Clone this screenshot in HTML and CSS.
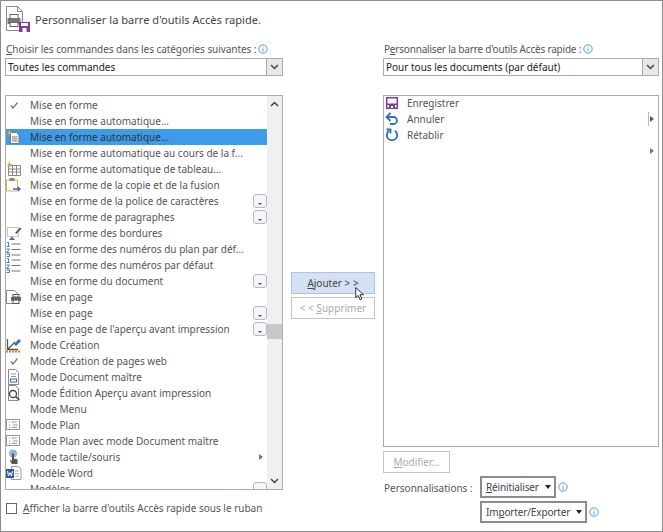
FILE: index.html
```html
<!DOCTYPE html>
<html lang="fr">
<head>
<meta charset="UTF-8">
<title>Personnaliser la barre d'outils Accès rapide</title>
<link rel="stylesheet" href="styles.css">
</head>
<body>
<svg class="defs" width="0" height="0">
  <symbol id="info" viewBox="0 0 10 10"><circle cx="5" cy="5" r="4.200" fill="#fff" stroke="#5b9bdc"/><path d="M5 2.400v1M5 4.400v3.200" stroke="#5b9bdc"/></symbol>
  <symbol id="chev" viewBox="0 0 9 6"><path d="M1 1l3.500 3.500L8 1" fill="none" stroke="#444" stroke-width="1.500"/></symbol>
  <symbol id="check" viewBox="0 0 16 16"><path d="M5 8.500l2 2.500 4.500-5.500" fill="none" stroke="#777" stroke-width="1.300"/></symbol>
  <symbol id="outline" viewBox="0 0 16 16"><rect x="0.500" y="2.500" width="13" height="10" fill="#fff" stroke="#999"/><path d="M3 5h1M3 8h1M3 10.500h1M6 5h5M7 8h5M6 10.500h5" stroke="#999"/></symbol>
  <symbol id="numbers" viewBox="0 0 16 16"><path d="M1 1.500h1.500v4M0.500 5.500H3.500M0.500 8h3L0.500 11.500h3M0.500 13h3v2.500h-3" fill="none" stroke="#2f6fb5" stroke-width="0.900"/><path d="M5.500 3h9M5.500 8.500h9M5.500 14h9" stroke="#777"/></symbol>
</svg>
<div class="dialog">
  <header class="title">
    <svg class="title-icon" width="26" height="28" viewBox="0 0 26 28">
      <path d="M1.500 1.500h11l5 5v19h-16z" fill="#fff" stroke="#888"/>
      <path d="M12.500 1.500v5h5" fill="none" stroke="#888"/>
      <rect x="5" y="9.500" width="8" height="4" fill="#fff" stroke="#666"/>
      <rect x="2.500" y="13" width="13" height="6" fill="#777"/>
      <rect x="5" y="17.500" width="8" height="4" fill="#fff" stroke="#666"/>
      <rect x="14" y="17" width="11" height="10" fill="#7d3f98"/>
      <rect x="16" y="18" width="7" height="3" fill="#fff"/>
      <rect x="17.500" y="23" width="4" height="4" fill="#fff"/>
    </svg>
    <span>Personnaliser la barre d'outils Accès rapide.</span>
  </header>

  <div class="columns">
    <section class="col col-left">
      <label class="field-label field-left"><u>C</u>hoisir les commandes dans les catégories suivantes :<svg class="info"><use href="#info"/></svg></label>
      <div class="select"><span>Toutes les commandes</span><b class="select-btn"><svg width="9" height="6"><use href="#chev"/></svg></b></div>
      <div class="list list-left">
        <ul class="rows">
          <li><svg class="ico"><use href="#check"/></svg>Mise en forme</li>
          <li><i class="ico"></i>Mise en forme automatique...</li>
          <li class="selected"><svg class="ico" viewBox="0 0 16 16"><path d="M4.500 3.500h6l2.500 2.500v8.500H4.500z" fill="#fff" stroke="#777"/><path d="M6 8h5.500M6 10h5.500M6 12h5.500" stroke="#777"/><path d="M4 0L1 5h2L2 8l4-5H4z" fill="#f0a030"/></svg>Mise en forme automatique...</li>
          <li><i class="ico"></i>Mise en forme automatique au cours de la f...</li>
          <li><svg class="ico" viewBox="0 0 16 16"><path d="M2.500 4.500h12v10h-12zM2.500 8h12M2.500 11h12M6.500 4.500v10M10.500 4.500v10" fill="#fff" stroke="#888"/><path d="M4 0L1 5h2L2 8l4-5H4z" fill="#f0a030"/></svg>Mise en forme automatique de tableau...</li>
          <li><svg class="ico" viewBox="0 0 16 16"><path d="M0.500 3h11v11h-11z" fill="#fff" stroke="#e5ad55"/><rect x="3.500" y="1" width="5" height="3" fill="#888"/><path d="M7 12h7m-2-2l2 2-2 2" fill="none" stroke="#2f6fb5" stroke-width="1.300"/></svg>Mise en forme de la copie et de la fusion</li>
          <li><i class="ico"></i>Mise en forme de la police de caractères<b class="gallery"></b></li>
          <li><i class="ico"></i>Mise en forme de paragraphes<b class="gallery"></b></li>
          <li><svg class="ico" viewBox="0 0 16 16"><rect x="1.500" y="2.500" width="11" height="9" fill="#fff" stroke="#888" stroke-dasharray="1 1"/><path d="M9 8l5-5.500 1.500 1L10.500 9z" fill="#555"/><path d="M3 15l3-3.500 3 3.500z" fill="#2f6fb5"/></svg>Mise en forme des bordures</li>
          <li><svg class="ico"><use href="#numbers"/></svg>Mise en forme des numéros du plan par déf...</li>
          <li><svg class="ico"><use href="#numbers"/></svg>Mise en forme des numéros par défaut</li>
          <li><i class="ico"></i>Mise en forme du document<b class="gallery"></b></li>
          <li><svg class="ico" viewBox="0 0 16 16"><path d="M0.500 1.500h8l3 3v10h-11z" fill="#fff" stroke="#888"/><rect x="5" y="8" width="10" height="4" fill="#666"/><rect x="7" y="11" width="6" height="3.500" fill="#fff" stroke="#555"/><rect x="7" y="5.500" width="6" height="2.500" fill="#fff" stroke="#555"/></svg>Mise en page</li>
          <li><i class="ico"></i>Mise en page<b class="gallery"></b></li>
          <li><i class="ico"></i>Mise en page de l'aperçu avant impression<b class="gallery"></b></li>
          <li><svg class="ico" viewBox="0 0 16 16"><path d="M1.500 2v10.500H12M1.500 12.500L9 5" fill="none" stroke="#555" stroke-width="1.300"/><path d="M8 7l5-5 2 2-5 5z" fill="#2f6fb5"/><path d="M0 14.500h15" stroke="#e87722" stroke-width="2" stroke-dasharray="2 1"/></svg>Mode Création</li>
          <li><svg class="ico"><use href="#check"/></svg>Mode Création de pages web</li>
          <li><svg class="ico" viewBox="0 0 16 16"><path d="M2.500 0.500h7l3 3v12h-10z" fill="#fff" stroke="#888"/><path d="M5 5h5M5 7.500h5" stroke="#999"/><rect x="4.500" y="10" width="6" height="3" fill="#fff" stroke="#2f6fb5"/></svg>Mode Document maître</li>
          <li><svg class="ico" viewBox="0 0 16 16"><path d="M2.500 0.500h7l3 3v12h-10z" fill="#fff" stroke="#888"/><circle cx="7" cy="9" r="3.500" fill="#fff" stroke="#444" stroke-width="1.300"/><path d="M9.500 11.500l4 3.500" stroke="#444" stroke-width="1.600"/></svg>Mode Édition Aperçu avant impression</li>
          <li><i class="ico"></i>Mode Menu</li>
          <li><svg class="ico"><use href="#outline"/></svg>Mode Plan</li>
          <li><svg class="ico"><use href="#outline"/></svg>Mode Plan avec mode Document maître</li>
          <li><svg class="ico" viewBox="0 0 16 16"><circle cx="7" cy="4.500" r="4" fill="#8db8e2"/><path d="M6 4.500h2v5l3.500 1v4.500H6L3.500 11l2.500.5z" fill="#555"/></svg>Mode tactile/souris<b class="submenu"></b></li>
          <li><svg class="ico" viewBox="0 0 16 16"><path d="M5.500 1.500h7l2.500 2.500v10.500h-9.500z" fill="#fff" stroke="#999"/><path d="M9 6h4M9 8.500h4M9 11h4" stroke="#aaa"/><rect x="0" y="4" width="8" height="9" fill="#2b5aa8"/><path d="M1.500 6l1 5 1.500-3.500L5.500 11l1-5" fill="none" stroke="#fff"/></svg>Modèle Word</li>
          <li><i class="ico"></i>Modèler<b class="gallery"></b></li>
        </ul>
        <div class="scrollbar">
          <svg class="scroll-arrow" width="9" height="6" viewBox="0 0 9 6"><path d="M1 5l3.500-3.500L8 5" fill="none" stroke="#444" stroke-width="1.500"/></svg>
          <div class="scroll-track"><div class="scroll-thumb"></div></div>
          <svg class="scroll-arrow" width="9" height="6"><use href="#chev"/></svg>
        </div>
      </div>
      <label class="check-row"><span class="checkbox"></span><span><u>A</u>fficher la barre d'outils Accès rapide sous le ruban</span></label>
    </section>

    <div class="col-mid">
      <button class="btn btn-add"><u>A</u>jouter &gt; &gt;</button>
      <button class="btn btn-off">&lt; &lt; <u>S</u>upprimer</button>
    </div>

    <section class="col col-right">
      <label class="field-label field-right">P<u>e</u>rsonnaliser la barre d'outils Accès rapide :<svg class="info"><use href="#info"/></svg></label>
      <div class="select"><span>Pour tous les documents (par défaut)</span><b class="select-btn"><svg width="9" height="6"><use href="#chev"/></svg></b></div>
      <div class="list list-right">
        <ul class="rows rows-right">
          <li><svg class="ico" viewBox="0 0 16 16"><path d="M2.700 2.700h10.600v10.600H2.700z" fill="#fff" stroke="#7d3f98" stroke-width="1.500"/><path d="M3 8.500h10v1.500H3zM5 10h6v3.500H5z" fill="#7d3f98"/><rect x="7" y="11" width="2" height="2" fill="#fff"/></svg>Enregistrer</li>
          <li><svg class="ico" viewBox="0 0 16 16"><path d="M3 6h6.500a3.500 3.500 0 0 1 0 7H6" fill="none" stroke="#2f6fb5" stroke-width="1.800"/><path d="M6.500 2L2.500 6l4 4" fill="none" stroke="#2f6fb5" stroke-width="1.800"/></svg>Annuler<b class="divider"></b><b class="submenu submenu-blue"></b></li>
          <li><svg class="ico" viewBox="0 0 16 16"><path d="M5.200 3.700a5.200 5.200 0 1 0 5.600 0" fill="none" stroke="#2f6fb5" stroke-width="1.800"/><path d="M2.500 2.500h4v4" fill="none" stroke="#2f6fb5" stroke-width="1.800"/></svg>Rétablir</li>
          <li><i class="ico"></i><b class="submenu"></b></li>
        </ul>
      </div>
      <button class="btn btn-off btn-modify"><u>M</u>odifier...</button>
      <div class="custom">
        <span class="custom-label">Personnalisations :</span>
        <div class="custom-btns">
          <div class="custom-line"><button class="btn-menu"><u>R</u>éinitialiser<b class="caret"></b></button><svg class="info"><use href="#info"/></svg></div>
          <div class="custom-line"><button class="btn-menu">Im<u>p</u>orter/Exporter<b class="caret"></b></button><svg class="info"><use href="#info"/></svg></div>
        </div>
      </div>
    </section>
  </div>
</div>
<svg class="cursor" width="10" height="16" viewBox="0 0 14 20"><path d="M1 1v14l3.500-3 2.500 6 2.500-1-2.500-6H12z" fill="#fff" stroke="#222" stroke-width="1.300"/></svg>
</body>
</html>
```

FILE: styles.css
```css
* {
  box-sizing: border-box;
}
html, body {
  margin: 0;
  height: 100%;
}
body {
  position: relative;
  width: 663px;
  height: 532px;
  overflow: hidden;
  background-color: #fff;
  font-family: "Noto Sans", "Open Sans", sans-serif;
  font-size: 10px;
  color: #555;
}
.defs {
  position: absolute;
}
.dialog {
  width: 663px;
  height: 532px;
  padding: 5px 2px 0 5px;
  border: 1px solid #8c8c8c;
}
.title {
  display: flex;
  align-items: center;
  gap: 4px;
  height: 28px;
  margin-left: -1px;
  padding-bottom: 2px;
  font-size: 11.1px;
  color: #444;
}
.columns {
  display: flex;
  margin-top: 8px;
  margin-left: -1px;
}
.col-left {
  width: 278px;
}
.col-right {
  width: 276px;
}
.col-mid {
  width: 100px;
  padding: 230px 8px 0 8px;
  display: flex;
  flex-direction: column;
  gap: 3px;
}
.field-label {
  display: flex;
  align-items: center;
  height: 16px;
  padding: 0 0 2px 1px;
  white-space: nowrap;
}
.field-left {
  letter-spacing: -0.06px;
}
.field-right {
  letter-spacing: -0.2px;
}
.info {
  width: 10px;
  height: 10px;
  margin-left: 2px;
  flex: none;
}
.select {
  display: flex;
  align-items: center;
  justify-content: space-between;
  height: 18px;
  border: 1px solid #ababab;
  padding-left: 2px;
  color: #222;
}
.select-btn {
  display: flex;
  align-items: center;
  justify-content: center;
  width: 16px;
  height: 16px;
  background-color: #e8e8e8;
  border-left: 1px solid #ababab;
}
.list {
  display: flex;
  margin-top: 19px;
  border: 1px solid #ababab;
  overflow: hidden;
}
.list-left {
  height: 395px;
}
.list-right {
  height: 352px;
}
.rows {
  flex: 1;
  margin: 0;
  padding: 1px 0 0;
  list-style: none;
  min-width: 0;
}
.rows li {
  position: relative;
  display: flex;
  align-items: center;
  height: 16px;
  white-space: nowrap;
}
.rows .selected {
  background-color: #3d9be9;
  color: #333;
}
.rows-right {
  padding-top: 0;
  margin-top: -1px;
}
.ico {
  display: block;
  flex: none;
  width: 16px;
  height: 16px;
  margin-right: 8px;
}
.rows-right .ico {
  margin-right: 7px;
}
.gallery {
  position: absolute;
  right: 0;
  top: 1px;
  width: 14px;
  height: 14px;
  background-color: #f4f6fb;
  border: 1px solid #b5b9c4;
  border-radius: 3px;
}
.gallery::after {
  content: "";
  position: absolute;
  left: 4px;
  bottom: 2px;
  border-left: 2px solid transparent;
  border-right: 2px solid transparent;
  border-top: 2px solid #2f4f9a;
}
.submenu {
  position: absolute;
  right: 4px;
  top: 5px;
  border-top: 3px solid transparent;
  border-bottom: 3px solid transparent;
  border-left: 4px solid #777;
}
.submenu-blue {
  border-left-color: #44598a;
}
.divider {
  position: absolute;
  right: 9px;
  top: 1px;
  width: 1px;
  height: 14px;
  background-color: #bbb;
}
.scrollbar {
  flex: none;
  width: 15px;
  display: flex;
  flex-direction: column;
  align-items: center;
  background-color: #f0f0f0;
  padding: 5px 0 5px;
}
.scroll-track {
  flex: 1;
  width: 100%;
  padding-top: 217px;
}
.scroll-thumb {
  height: 15px;
  background-color: #c8c8c8;
}
.check-row {
  display: flex;
  align-items: center;
  gap: 6px;
  margin-top: 11px;
  margin-left: 1px;
}
.checkbox {
  width: 11px;
  height: 11px;
  border: 1px solid #666;
}
.btn {
  display: block;
  font: inherit;
  color: #444;
  padding: 0;
  height: 22px;
  width: 84px;
  background-color: #fff;
}
.btn-add {
  background-color: #d3e1f3;
  border: 1px solid #a9c4e6;
}
.btn-off {
  border: 1px solid #c4c4c4;
  color: #aaa;
}
.btn-modify {
  width: 67px;
  height: 22px;
  margin-top: 4px;
}
.custom {
  display: flex;
  margin-top: 3px;
}
.custom-label {
  width: 96px;
  line-height: 22px;
  margin-top: 1px;
  margin-left: 1px;
  white-space: nowrap;
}
.custom-btns {
  display: flex;
  flex-direction: column;
  gap: 3px;
}
.custom-line {
  display: flex;
  align-items: center;
}
.btn-menu {
  display: flex;
  align-items: center;
  height: 22px;
  padding: 0 3px 0 4px;
  font: inherit;
  letter-spacing: -0.15px;
  color: #444;
  background-color: #fff;
  border: 2px solid #8c8c8c;
  white-space: nowrap;
}
.caret {
  margin-left: 6px;
  border-left: 3.5px solid transparent;
  border-right: 3.5px solid transparent;
  border-top: 4px solid #222;
}
.cursor {
  position: absolute;
  left: 355px;
  top: 286px;
}
```
